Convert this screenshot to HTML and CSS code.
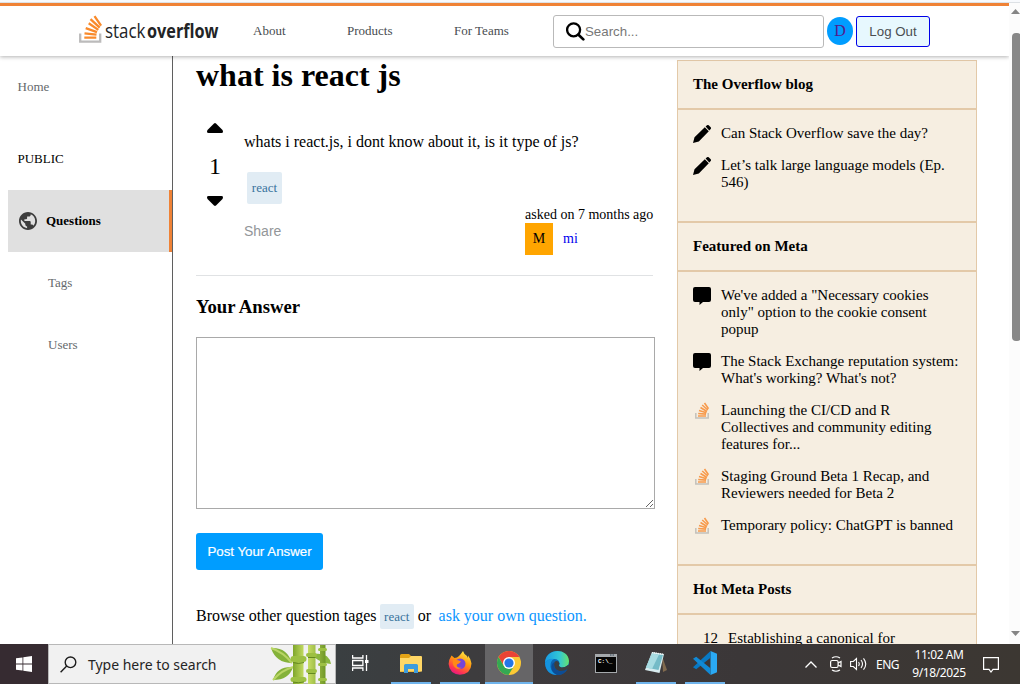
FILE: index.html
```
<!DOCTYPE html>
<html lang="en">
<head>
<meta charset="utf-8">
<title>what is react js - Stack Overflow</title>
<link rel="stylesheet" href="styles.css">
</head>
<body>
<svg class="defs" width="0" height="0">
  <symbol id="so" viewBox="0 0 24 28">
    <path d="M1.200 18.500v8.200h20v-8.200" fill="none" stroke="#bcbbbb" stroke-width="2.300"/>
    <path d="M5.300 22.600h12M5.500 18.300l12 1.300M6.700 13.200l11.300 4M9.700 8.300l9.600 6.600M15.500 1.200l6.600 9.400M11.500 4.200l9.200 8.500" fill="none" stroke="#f98a2b" stroke-width="2.300"/>
  </symbol>
  <symbol id="so-mini" viewBox="0 0 18 18">
    <path d="M2.800 11v5h12.400v-5" fill="none" stroke="#c4c1bb" stroke-width="1.500"/>
    <path d="M5 14h8M5.200 11.500l7.800.6M6 8.600l7.500 2.200M7.500 5.500l6.500 4M9.200 3l5.600 5M11.500 1l4 5.800" fill="none" stroke="#f79a4c" stroke-width="1.600"/>
  </symbol>
  <symbol id="pencil" viewBox="0 0 18 18">
    <path d="M12.600 1.600 14 .3a1.200 1.200 0 0 1 1.700 0l2 2a1.200 1.200 0 0 1 0 1.700l-1.400 1.500zM11.800 2.200l4 4L5.800 16.400 0 18l1.500-5.800z"/>
  </symbol>
  <symbol id="comment" viewBox="0 0 18 18">
    <path d="M2 0h14a2 2 0 0 1 2 2v11a2 2 0 0 1-2 2H10L6.500 18V15H2a2 2 0 0 1-2-2V2a2 2 0 0 1 2-2z"/>
  </symbol>
</svg>
<div class="browser-edge"></div>
<div class="viewport">
  <div class="page">
    <header class="navbar">
      <svg class="logo" width="142" height="30" viewBox="0 0 142 30">
        <use href="#so" x="0" y="0" width="24" height="28"/>
        <text class="logo-light" x="26" y="23" textLength="40.500" lengthAdjust="spacingAndGlyphs">stack</text>
        <text class="logo-bold" x="68" y="23" textLength="71.500" lengthAdjust="spacingAndGlyphs">overflow</text>
      </svg>
      <nav class="nav-links"><a>About</a><a>Products</a><a>For Teams</a></nav>
      <div class="search">
        <svg width="19" height="19" viewBox="0 0 19 19" fill="none" stroke="#000" stroke-linecap="round"><circle cx="7.600" cy="7.800" r="6.500" stroke-width="2.300"/><path d="M12.500 12.700l4.800 4.700" stroke-width="2.700"/></svg>
        <span>Search...</span>
      </div>
      <a class="avatar">D</a>
      <button class="logout">Log Out</button>
    </header>
    <div class="columns">
      <aside class="sidebar">
        <div class="side-home">Home</div>
        <div class="side-label">PUBLIC</div>
        <div class="side-active">
          <svg width="18" height="18" viewBox="2 2 20 20" fill="#3c3c3c"><path d="M12 2C6.480 2 2 6.480 2 12s4.480 10 10 10 10-4.480 10-10S17.520 2 12 2zm-1 17.930c-3.950-.49-7-3.850-7-7.930 0-.62.08-1.210.21-1.790L9 15v1c0 1.100.9 2 2 2v1.930zm6.900-2.540c-.26-.81-1-1.390-1.900-1.390h-1v-3c0-.55-.45-1-1-1H8v-2h2c.55 0 1-.45 1-1V7h2c1.100 0 2-.9 2-2v-.41c2.930 1.190 5 4.060 5 7.410 0 2.080-.8 3.970-2.100 5.390z"/></svg>
          <span>Questions</span>
        </div>
        <div class="side-item">Tags</div>
        <div class="side-item">Users</div>
      </aside>
      <main class="question">
        <h1>what is react js</h1>
        <section class="post">
          <div class="votes">
            <svg width="16" height="10" viewBox="0 0 16 10"><path d="M7 .400Q8-.4 9 .400L15.500 7Q16.800 10 14.500 10h-13Q-.8 10 .5 7z"/></svg>
            <span>1</span>
            <svg width="16" height="10" viewBox="0 0 16 10"><path d="M7 9.600Q8 10.400 9 9.600L15.500 3Q16.800 0 14.500 0h-13Q-.8 0 .5 3z"/></svg>
          </div>
          <div class="post-body">
            <p>whats i react.js, i dont know about it, is it type of js?</p>
            <span class="tag tag-tall">react</span>
            <div class="post-foot">
              <button class="share">Share</button>
              <div class="author">
                <p>asked on 7 months ago</p>
                <div class="author-row"><span class="author-badge">M</span><a>mi</a></div>
              </div>
            </div>
          </div>
        </section>
        <h3>Your Answer</h3>
        <textarea class="answer"></textarea>
        <button class="submit">Post Your Answer</button>
        <p class="browse">Browse other question tages <span class="tag">react</span> or <a>ask your own question.</a></p>
      </main>
      <aside class="widget">
        <h4>The Overflow blog</h4>
        <ul>
          <li><svg><use href="#pencil"/></svg><span>Can Stack Overflow save the day?</span></li>
          <li><svg><use href="#pencil"/></svg><span>Let’s talk large language models (Ep. 546)</span></li>
        </ul>
        <h4>Featured on Meta</h4>
        <ul>
          <li><svg><use href="#comment"/></svg><span>We've added a "Necessary cookies only" option to the cookie consent popup</span></li>
          <li><svg><use href="#comment"/></svg><span>The Stack Exchange reputation system: What's working? What's not?</span></li>
          <li><svg><use href="#so-mini"/></svg><span>Launching the CI/CD and R Collectives and community editing features for...</span></li>
          <li><svg><use href="#so-mini"/></svg><span>Staging Ground Beta 1 Recap, and Reviewers needed for Beta 2</span></li>
          <li><svg><use href="#so-mini"/></svg><span>Temporary policy: ChatGPT is banned</span></li>
        </ul>
        <h4>Hot Meta Posts</h4>
        <ul class="hot">
          <li><b>12</b><span>Establishing a canonical for</span></li>
        </ul>
      </aside>
    </div>
  </div>
  <div class="scrollbar">
    <svg width="9" height="5" viewBox="0 0 9 5"><path d="M4.500 0 9 5H0z" fill="#858585"/></svg>
    <div class="track"><div class="thumb"></div></div>
    <svg width="9" height="5" viewBox="0 0 9 5"><path d="M0 0h9L4.500 5z" fill="#858585"/></svg>
  </div>
</div>
<footer class="taskbar">
  <div class="start"><svg width="16" height="16" viewBox="0 0 16 16" fill="#fff"><path d="M0 2.300 6.500 1.400v6.200H0zM7.300 1.300 16 0v7.600H7.300zM0 8.400h6.500v6.200L0 13.700zM7.300 8.400H16V16l-8.700-1.200z"/></svg></div>
  <div class="task-search">
    <svg width="17" height="17" viewBox="0 0 17 17" fill="none" stroke="#1c1c1c" stroke-width="1.400"><circle cx="10.500" cy="6.300" r="5.300"/><path d="M6.700 10 .6 16.200"/></svg>
    <span>Type here to search</span>
    <svg class="bamboo" width="62" height="39" viewBox="0 0 62 39">
      <defs><linearGradient id="stalk"><stop offset="0" stop-color="#7fa62c"/><stop offset=".4" stop-color="#d0e56b"/><stop offset="1" stop-color="#6f9726"/></linearGradient></defs>
      <path d="M1 3Q17 2 22 18 6 18 1 3zM3 35Q7 21 23 22 19 35 3 35z" fill="#85b23a"/>
      <path d="M1 3Q13 7 22 18M3 35Q12 25 23 22" stroke="#b9d565" stroke-width="2" fill="none"/>
      <path d="M44 9Q59 7 61 19 51 18 44 12z" fill="#8ab63f"/>
      <path d="M23 0h10.500v39H23zM38 0h7.500v39H38zM50 0h5.500v39H50z" fill="url(#stalk)"/>
      <g fill="#9dc043"><rect x="20.500" y="11" width="16" height="6" rx="3"/><rect x="20.500" y="32" width="16" height="5" rx="2.500"/><rect x="36" y="8" width="11" height="4" rx="2"/><rect x="36" y="24" width="11" height="4" rx="2"/><rect x="48" y="3" width="9" height="3" rx="1.500"/><rect x="48" y="18" width="9" height="3" rx="1.500"/><rect x="48" y="33" width="9" height="3" rx="1.500"/></g>
      <path d="M23 17.500q5 2 11 0M23 37q5 1.500 11 0M38 12.500h7.500M38 28.500h7.500" stroke="#64891f" fill="none"/>
    </svg>
  </div>
  <div class="apps">
    <div class="app plain"><svg width="17" height="16" viewBox="0 0 17 16" fill="none" stroke="#fff" stroke-width="1.300"><path d="M.6 0v3h10.300V0M.6 16v-3h10.300v3M.6 5.500h10.300v5H.6zM14.500 0v16"/><path d="M13 6.500h3.500" stroke-width="3"/></svg></div>
    <div class="app open"><svg width="22" height="19" viewBox="0 0 22 19"><path d="M0 1.500Q0 0 1.500 0H9l2 2h9.500v16H0z" fill="#e3a316"/><path d="M0 4h9l2-2h10q1 0 1 1v14.500H0z" fill="#ffd766"/><path d="M4 19v-7.500q0-1.500 1.500-1.500h11q1.500 0 1.500 1.500V19h-4v-4H8v4z" fill="#3e9cdb"/></svg></div>
    <div class="app open"><svg width="24" height="24" viewBox="0 0 24 24"><defs><linearGradient id="fox" x1=".8" y1="0" x2=".3" y2="1"><stop stop-color="#fff44f"/><stop offset=".45" stop-color="#ff980e"/><stop offset=".8" stop-color="#ff3750"/><stop offset="1" stop-color="#e31587"/></linearGradient></defs><path d="M3.500 4.500 6.500 7 9 6.500 11 5q2-2 4-5 1 3.500 4 5l1 2V4.500q3 3.500 3.500 8Q23 23 12 23.700 1.500 23 .6 13 .5 9 3.500 4.500z" fill="url(#fox)"/><circle cx="12.200" cy="12.700" r="5.300" fill="#7545d9"/><path d="M5 9q4-1 8 1.500l-2 2q-3 .5-2 3 2 2 5 1-4 3-7.500-.5Q4 13 5 9z" fill="#ff8a16"/></svg></div>
    <div class="app open current"><svg width="24" height="24" viewBox="0 0 24 24"><circle cx="12" cy="12" r="12" fill="#fcc934"/><path d="M1.600 6A12 12 0 0 1 22.400 6H12L7 15z" fill="#ea4335"/><path d="M1.600 6A12 12 0 0 0 11.500 24L17 15 12 17.500 6.800 15z" fill="#34a853"/><circle cx="12" cy="12" r="6" fill="#fff"/><circle cx="12" cy="12" r="4.600" fill="#2476e8"/></svg></div>
    <div class="app"><svg width="24" height="24" viewBox="0 0 24 24"><defs><linearGradient id="edge"><stop stop-color="#199be3"/><stop offset=".6" stop-color="#32c7d5"/><stop offset="1" stop-color="#66e36c"/></linearGradient></defs><circle cx="12" cy="12" r="12" fill="#0c65b2"/><path d="M0 12C0-3 23-4 24 10q0 6-7 6.500-4-.5-2.500-3Q15 8 9 8 2 8 0 12z" fill="url(#edge)"/><path d="M0 12q3-5 9-4-4 2-3.500 8 1 6 7 8Q1 24 0 12z" fill="#1593de"/><path d="M9.500 11q-2 8 5.500 9.500 4 .5 7.500-2L25 15l-2-1q-3 2.500-6.500 2.500-4-1-2-4-2-4-5-1.500z" fill="#3b3f42"/><path d="M9.500 11q-2 7 5 9 4 .5 8-2Q18 25 12 24 6 21 6.500 15 7 12 9.500 11z" fill="#0d4c94"/></svg></div>
    <div class="app"><svg width="22" height="19" viewBox="0 0 22 19"><path d="M0 0h22v19H0z" fill="#a5a9ac"/><path d="M1 3h20v15H1z" fill="#050505"/><path d="M15 1h1.500M17.500 1H19" stroke="#345" stroke-width="1"/><text x="3" y="9" class="prompt">C:\_</text></svg></div>
    <div class="app open"><svg width="22" height="22" viewBox="0 0 22 22"><path d="M17 4 22 18l-4 2z" fill="#806a4e"/><path d="M7 0 19 2l-4.500 19L0 18z" fill="#d8ecef"/><path d="M7 1.500 18 3l-4.500 15L1 15.500z" fill="#74bbc7"/><path d="m7 1.500 7 1L7 17l-6-1.500z" fill="#a8dce2"/><path d="M7 .600 19 2.500" stroke="#eef5f5" stroke-width="1.500" stroke-dasharray="1 1"/></svg></div>
    <div class="app open"><svg width="24" height="24" viewBox="0 0 24 24"><path d="M17.500 0 24 2.800v18.400L17.500 24z" fill="#2aa9f4"/><path d="M17.500 0v6.700L3.200 18.300 0 16.200z" fill="#0879c4"/><path d="M17.500 24v-6.700L3.200 5.700 0 7.800z" fill="#118ad6"/></svg></div>
  </div>
  <div class="tray">
    <svg width="12" height="7" viewBox="0 0 12 7" fill="none" stroke="#fff" stroke-width="1.300"><path d="M.5 6.500 6 1l5.500 5.500"/></svg>
    <svg class="meet" width="12" height="16" viewBox="0 0 12 16" fill="none" stroke="#fff" stroke-width="1.200"><rect x=".6" y="4.500" width="7.500" height="7" rx="1.500"/><path d="M8 7l3-1.500v5L8 9M2 2q4-2.500 8 0M2 14q4 2.500 8 0"/></svg>
    <svg class="sound" width="17" height="14" viewBox="0 0 17 14" fill="none" stroke="#fff" stroke-width="1.100"><path d="M.6 4.500h2.700L6.500 1.500v11L3.300 9.500H.6zM8.500 5q1.500 2 0 4M11 3q3 4 0 8M13.500 1.300q4.500 5.700 0 11.400"/></svg>
    <span class="lang">ENG</span>
    <div class="clock"><span>11:02 AM</span><span>9/18/2025</span></div>
    <svg class="notice" width="16" height="16" viewBox="0 0 16 16" fill="none" stroke="#fff" stroke-width="1.200"><path d="M.6.600h14.800v11.800H10L8 15l-2-2.600H.6z"/></svg>
  </div>
</footer>
</body>
</html>
```
FILE: styles.css
```
* { box-sizing: border-box; margin: 0; padding: 0; }
body { width: 1020px; height: 684px; overflow: hidden; background: #fff; color: #000; font-family: "Liberation Serif", "Times New Roman", serif; display: flex; flex-direction: column; }
.defs { position: absolute; }
svg { display: block; flex: none; }
button { cursor: pointer; }

.browser-edge { flex: none; height: 3px; background: #f8fafd; border-bottom: 1px solid #dde1e5; }
.viewport { flex: none; height: 641px; display: flex; overflow: hidden; }
.page { width: 1009px; height: 641px; overflow: hidden; display: flex; flex-direction: column; }

.navbar { position: relative; flex: none; height: 53px; border-top: 3px solid #ef8236; background: #fff; box-shadow: 0 1px 4px rgba(0,0,0,.3); display: flex; align-items: center; padding-left: 79px; }
.logo { align-self: flex-start; margin-top: 9px; overflow: visible; }
.logo-light { font: 400 20px "Open Sans", sans-serif; fill: #222426; }
.logo-bold { font: 700 20px "Open Sans", sans-serif; fill: #222426; }
.nav-links { width: 332px; padding-left: 32px; display: flex; gap: 61.5px; font-size: 13px; color: #484c50; }
.nav-links a { white-space: nowrap; }
.search { width: 271px; height: 33px; border: 1px solid #b9b9b9; border-radius: 3px; padding-left: 12px; display: flex; align-items: center; font: 13.3px "Liberation Sans", Arial, sans-serif; color: #777; }
.avatar { margin-left: 3px; width: 26px; height: 28px; border-radius: 50%; background: #009dff; color: #551a8b; font-size: 16px; display: flex; align-items: center; justify-content: center; }
.logout { margin-left: 3px; width: 74px; height: 31px; border: 1px solid #0000e8; border-radius: 3px; background: #e7f8fe; color: #4a4e51; font: 13.3px "Liberation Sans", Arial, sans-serif; }

.columns { display: flex; align-items: flex-start; flex: 1; }
.sidebar { width: 173px; height: 588px; border-right: 1px solid #5f5f5f; font-size: 13px; color: #65696c; }
.side-home { height: 62px; line-height: 62px; padding-left: 17.5px; }
.side-label { height: 72px; line-height: 82px; padding-left: 17.5px; color: #000; }
.side-active { margin-left: 8px; height: 62px; background: #e0e0e0; border-right: 3px solid #ef8236; display: flex; align-items: center; gap: 9px; padding-left: 11px; font-weight: 700; color: #000; }
.side-item { height: 62px; line-height: 62px; padding-left: 48px; }

.question { width: 459px; margin-left: 23px; padding-top: 1px; }
h1 { font-size: 32px; line-height: 37px; }
.post { width: 457px; height: 182px; display: flex; border-bottom: 1px solid #e0e2e4; }
.votes { width: 38px; padding-top: 29px; display: flex; flex-direction: column; align-items: center; }
.votes span { font-size: 24px; line-height: 28px; margin: 19px 0 16px; }
.post-body { flex: 1; margin-left: 10px; padding-top: 39px; }
.post-body > p { font-size: 16px; line-height: 18px; white-space: nowrap; }
.tag { display: inline-block; font-size: 13px; height: 25px; line-height: 25px; padding: 0 5px; background: #e1ecf4; color: #39739d; border-radius: 2px; }
.tag-tall { display: block; width: 35px; height: 32px; line-height: 32px; margin: 21px 0 0 3px; text-align: center; padding: 0; }
.post-foot { display: flex; justify-content: space-between; align-items: flex-start; }
.share { border: 0; background: none; color: #939699; font: 14px/18px "Liberation Sans", Arial, sans-serif; margin-top: 18px; }
.author { width: 128px; margin-top: 2px; font-size: 14px; line-height: 17px; white-space: nowrap; }
.author-row { display: flex; gap: 10px; line-height: 32px; }
.author-row a { color: #0000ee; }
.author-badge { width: 28px; height: 32px; background: #ffa500; text-align: center; }
h3 { font-size: 18.72px; line-height: 22px; margin-top: 20px; }
.answer { display: block; width: 459px; height: 172px; margin-top: 19px; border: 1px solid #a9a9a9; outline: 0; }
.submit { display: block; margin-top: 24px; width: 127px; height: 37px; border: 0; border-radius: 3px; background: #009dff; color: #fff; font: 13.3px "Liberation Sans", Arial, sans-serif; -webkit-text-stroke: .2px #fff; white-space: nowrap; }
.browse { margin-top: 33px; font-size: 16px; line-height: 25px; height: 25px; white-space: nowrap; letter-spacing: -.01px; }
.browse .tag { padding: 0 4.5px; margin-left: -1px; }
.browse a { color: #0995ff; margin-left: 3.5px; }

.widget { width: 300px; height: 900px; margin: 4px 0 0 22px; background: #f6eee1; font-size: 15px; line-height: 17px; }
.widget h4 { height: 49px; border: 1px solid #e3c9a8; padding: 15px; font-size: 15px; line-height: 17px; }
.widget ul { list-style: none; border: 1px solid #e3c9a8; padding: 15px 15px 30px; display: flex; flex-direction: column; gap: 15px; }
.widget li { display: flex; gap: 10px; }
.widget li svg { width: 18px; height: 18px; margin-bottom: -1px; }
.widget li b { font-weight: 400; }
.widget .hot { padding-left: 25px; }

.scrollbar { width: 11px; height: 641px; background: #fcfcfc; padding: 6px 0 8px 2px; display: flex; flex-direction: column; }
.track { flex: 1; padding: 19px 0 0 1px; }
.thumb { width: 9px; height: 308px; border-radius: 4px; background: #888; }

.taskbar { flex: none; height: 40px; display: flex; color: #fff; font-family: "Open Sans", sans-serif; background: linear-gradient(90deg, #362b31 0 48px, #3a3f41 336px, #3e3b3d 520px, #3b3738 740px, #3c3732 1020px); }
.start { width: 48px; display: flex; align-items: center; justify-content: center; }
.task-search { width: 288px; background: #f1f1f1; border: 1px solid #b8b8b8; padding-left: 11px; display: flex; align-items: center; color: #252525; font: 14px "Noto Sans", sans-serif; }
.task-search span { margin-left: 11px; width: 182px; letter-spacing: -.02px; white-space: nowrap; }
.apps { display: flex; width: 395px; }
.app { width: 49px; height: 40px; display: flex; align-items: center; justify-content: center; border-bottom: 2px solid transparent; }
.app.open { width: 40px; margin: 0 4px 0 5px; border-color: #6fb4ec; }
.app.current { width: 48px; margin: 0 0 0 1px; background: #666567; }
.app.plain { width: 50px; padding-right: 2px; }
.app:not(.open):not(.plain) { padding-right: 1px; }
.prompt { font: 700 6px "Liberation Mono", monospace; fill: #fff; }
.tray { flex: 1; padding-left: 74px; display: flex; align-items: center; font: 12px "Noto Sans", sans-serif; }
.meet { margin-left: 13px; }
.sound { margin-left: 8px; }
.lang { margin-left: 9px; width: 24px; letter-spacing: -.5px; }
.clock { margin-left: 8px; width: 62px; display: flex; flex-direction: column; align-items: center; line-height: 18px; letter-spacing: -.4px; white-space: nowrap; }
.notice { margin: 1px 0 0 13px; }
```
